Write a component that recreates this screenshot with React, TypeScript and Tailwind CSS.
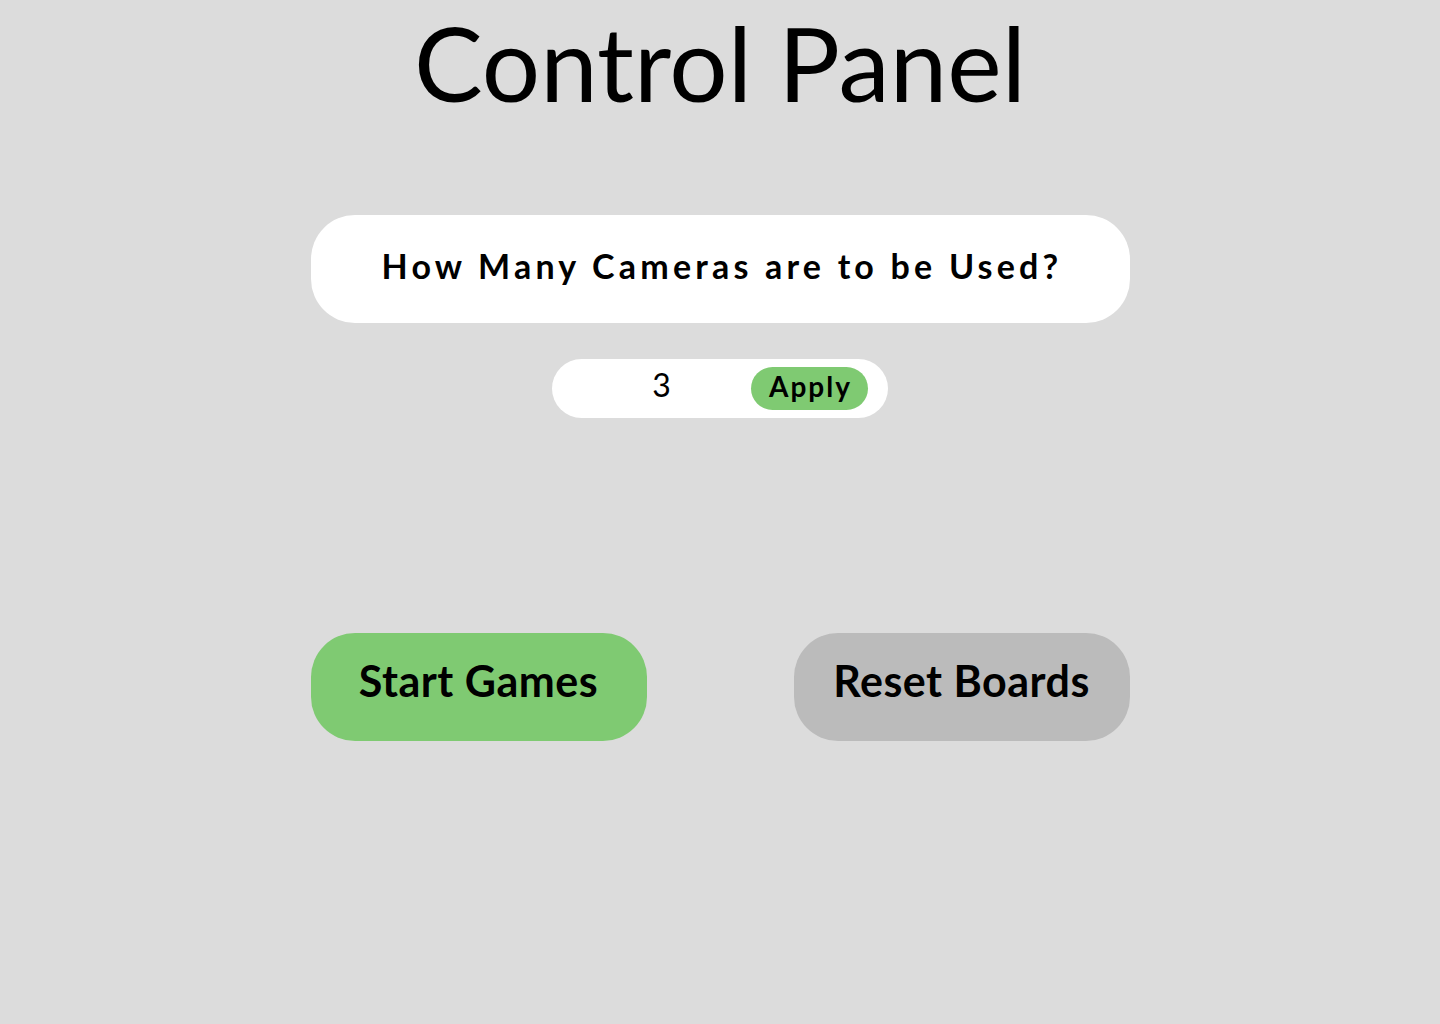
export default function App() {
  return (
    <div className="min-h-[1024px] w-full bg-[#dcdcdc] flex flex-col items-center font-['Lato',sans-serif] text-black">
      <h1 className="-mt-[15px] h-[139px] text-[103px] leading-normal font-normal">Control Panel</h1>

      <div className="mt-[91px] w-[819px] h-[108px] bg-white rounded-[44px] flex justify-center pt-[25px] pl-[4px]">
        <p className="text-[34px] font-bold leading-normal tracking-[4.2px]">How Many Cameras are to be Used?</p>
      </div>

      <div className="mt-[36px] w-[336px] h-[59px] bg-white rounded-full flex items-center px-[20px]">
        <input
          readOnly
          value="3"
          className="w-[179px] h-[59px] pb-[8px] text-center text-[32px] leading-normal bg-transparent outline-none font-['Lato',sans-serif]"
        />
        <button className="w-[117px] h-[43px] rounded-full bg-[#7fca72] flex justify-center items-start pt-[6px] pl-[2px] text-[28px] font-bold leading-[27px] tracking-[2px]">
          Apply
        </button>
      </div>

      <div className="mt-[215px] w-[819px] flex justify-between">
        <button className="w-[336px] h-[108px] rounded-[44px] bg-[#7fca72] flex justify-center items-start pt-[16px] text-[43px] font-bold leading-normal tracking-[0.5px]">
          Start Games
        </button>
        <button className="w-[336px] h-[108px] rounded-[44px] bg-[#bbbbbb] flex justify-center items-start pt-[16px] text-[43px] font-bold leading-normal tracking-[0.5px]">
          Reset Boards
        </button>
      </div>
    </div>
  );
}
